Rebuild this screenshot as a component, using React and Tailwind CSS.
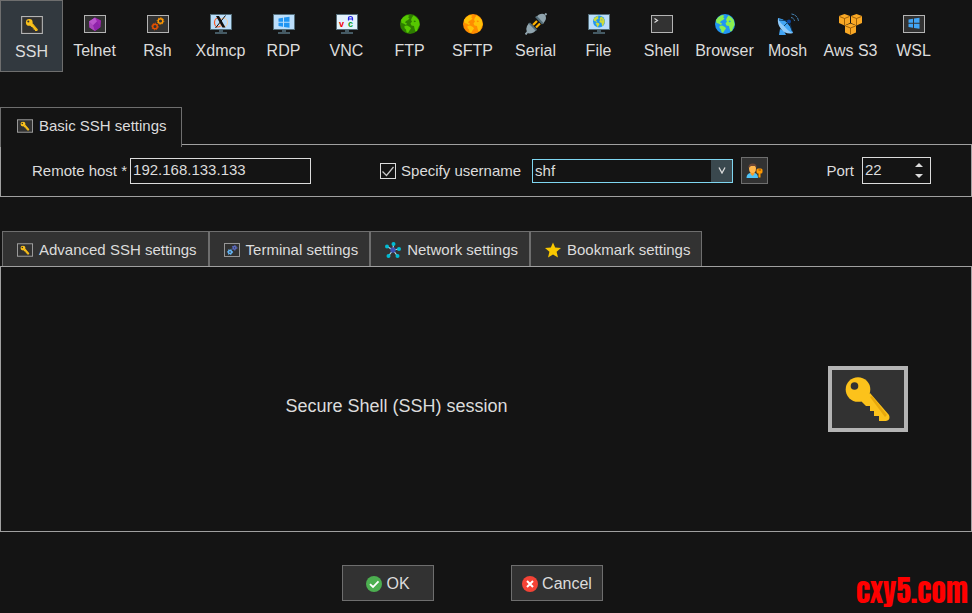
import { useState } from "react";

const KEY_SHAFT = "M33 35 L38 40 H42 V45 H46 V50 H51 V55 H58 Q63 54 61 49 L42 27 Z";

function KeyIcon({ className }) {
  return (
    <svg viewBox="0 0 80 66" className={className} aria-hidden="true">
      <rect x="2" y="2" width="76" height="62" fill="#323232" stroke="#b4b4b4" strokeWidth="4" />
      <path d={KEY_SHAFT} fill="#fcc21b" />
      <path d="M42 31 L57 51 L59 49 L44 30 Z" fill="#e8a80c" />
      <circle cx="30" cy="23.5" r="12.3" fill="#fcc21b" />
      <circle cx="26.5" cy="20" r="3.8" fill="#323232" />
    </svg>
  );
}

function Frame({ children }) {
  return (
    <svg viewBox="0 0 22 18" className="w-[22px] h-[18px]" aria-hidden="true">
      <rect x="0.5" y="0.5" width="21" height="17" fill="#323232" stroke="#b4b4b4" />
      {children}
    </svg>
  );
}

function Monitor({ children, screen = "#bbdefb" }) {
  return (
    <svg viewBox="0 0 22 20" className="w-[22px] h-5" aria-hidden="true">
      <rect x="0" y="0" width="22" height="16" fill="#546e7a" />
      <rect x="1" y="1" width="20" height="14" fill={screen} />
      <path d="M9 16h4v2h4v2H5v-2h4z" fill="#455a64" />
      {children}
    </svg>
  );
}

function GlobeShape({ sea, land }) {
  return (
    <>
      <circle cx="10" cy="10" r="10" fill={sea} />
      <path d="M1 6 Q3 3 6 1.6 L8 1 L9.5 2 L8 3 L9.5 4.5 L8 6 L6 7 L5 8.5 L7 9.5 L6 11 L3.5 9.5 L1.5 9 Z" fill={land} />
      <path d="M4.5 12 L7 11.5 L10 13 L11 14.5 L9.5 16.5 L8 19 L6.5 18 L6 15.5 L4.5 14 Z" fill={land} />
      <path d="M12 3.5 L13.5 1.5 Q18 4 19 7 L19.6 11 L18 14 L17 17 L15.5 17.5 L14.5 14.5 L14 12 L11.5 11.5 L10.5 9.5 L12 7.5 L11 6 Z" fill={land} />
      <path d="M13.5 7 L15 6.5 L16 7.5 L14.5 8.2 Z" fill={sea} />
    </>
  );
}

function Globe({ sea, land }) {
  return (
    <svg viewBox="0 0 20 20" className="w-5 h-5" aria-hidden="true">
      <GlobeShape sea={sea} land={land} />
    </svg>
  );
}

function GearShape({ cx, cy, r, color }) {
  return (
    <>
      <circle cx={cx} cy={cy} r={r} fill="none" stroke={color} strokeWidth="1.5" />
      <circle cx={cx} cy={cy} r={r + 1} fill="none" stroke={color} strokeWidth="1" strokeDasharray="1.2 1.3" />
    </>
  );
}

function WindowsShape({ color }) {
  return (
    <path
      d="M5.5 4.5 L10 3.8 V7.8 H5.5 Z M11 3.6 L16.5 2.8 V7.8 H11 Z M5.5 8.8 H10 V12.8 L5.5 12 Z M11 8.8 H16.5 V13.8 L11 13 Z"
      fill={color}
    />
  );
}

function TelnetIcon() {
  return (
    <Frame>
      <path d="M11 2.5 L17 5.5 L16.5 12 L11 16 L5.5 12.5 L5 6.5 Z" fill="#9c27b0" />
      <path d="M11 2.5 L5 6.5 L9 10.5 L13 6.5 Z" fill="#ba55cc" />
      <path d="M9 10.5 L13 6.5 L16.5 12 L11 16 Z" fill="#8e24aa" />
      <path d="M5 6.5 L9 10.5 L11 16 L5.5 12.5 Z" fill="#ab47bc" />
    </Frame>
  );
}

function RshIcon() {
  return (
    <Frame>
      <GearShape cx={13.5} cy={6} r={2.3} color="#ff9800" />
      <GearShape cx={8} cy={11.5} r={2.3} color="#e65100" />
    </Frame>
  );
}

function XdmcpIcon() {
  return (
    <Monitor>
      <ellipse cx="8" cy="8.5" rx="3.5" ry="4.5" fill="none" stroke="#ff5722" strokeWidth="1.2" />
      <ellipse cx="13.5" cy="8.5" rx="4" ry="4.5" fill="none" stroke="#ffcc99" strokeWidth="1" />
      <path d="M6 2 H9 L15.5 13.5 H12.5 Z" fill="#111" />
      <path d="M15.5 1.5 L5.5 14" stroke="#111" strokeWidth="1" />
    </Monitor>
  );
}

function RdpIcon() {
  return (
    <Monitor>
      <WindowsShape color="#2196f3" />
    </Monitor>
  );
}

function VncIcon() {
  return (
    <Monitor screen="#e3f2fd">
      <g fontFamily="Liberation Sans, sans-serif" fontWeight="bold" fontSize="9">
        <text x="3" y="13" fill="#f00000">v</text>
        <text x="12" y="13" fill="#009a20">c</text>
      </g>
      <path d="M12.5 6.5 V4.5 Q12.5 2.5 14.5 2.5 Q16.5 2.5 16.5 4.5 V6.5 M12.5 5 H16.5" fill="none" stroke="#2020e8" strokeWidth="1.2" />
    </Monitor>
  );
}

function SerialIcon() {
  return (
    <svg viewBox="0 0 22 22" className="w-[22px] h-[22px]" aria-hidden="true">
      <path d="M8 12 L12 8 M11 14.5 L15 10.5" stroke="#ffb300" strokeWidth="2.2" />
      <path d="M20 2 L21.5 0.5" stroke="#90a4ae" strokeWidth="2" />
      <path d="M11 4 L14 1.5 Q18 0 20 2 Q22 5 20 8 L18 11 Z" fill="#90a4ae" />
      <path d="M10 4 L12 3 L18.5 10 L17 11.5 Z" fill="#546e7a" />
      <path d="M4 10 L11 17.5 L8.5 19.5 Q4 21.5 2 19.5 Q0.5 16 2 13 Z" fill="#90a4ae" />
      <path d="M3.5 10.5 L5 9.5 L12 16.5 L11 18 Z" fill="#546e7a" />
      <path d="M2.5 19 L0.5 21.5" stroke="#90a4ae" strokeWidth="2" />
    </svg>
  );
}

function FileIcon() {
  return (
    <Monitor>
      <g transform="translate(5 1.5) scale(0.6)">
        <GlobeShape sea="#2196f3" land="#cddc39" />
      </g>
    </Monitor>
  );
}

function ShellIcon() {
  return (
    <Frame>
      <path d="M3.5 3.5 L6.5 5.5 L3.5 7.5" fill="none" stroke="#d8d8d8" strokeWidth="1.2" />
    </Frame>
  );
}

function MoshIcon() {
  return (
    <svg viewBox="0 0 22 22" className="w-[22px] h-[22px]" aria-hidden="true">
      <path d="M3 16 L7 18 L9 22 H2 Z" fill="#42a5f5" />
      <path d="M1 5 Q7 8 10 12 Q14 16 16 20 Q9 22 4 16 Q0 11 1 5 Z" fill="#90caf9" />
      <path d="M1 5 Q11 6 16 20 Q12 19 7 13 Q2 9 1 5 Z" fill="#42a5f5" />
      <path d="M2 7 L12 8 L15 18 M12 8 L7 13" fill="none" stroke="#0d3b66" strokeWidth="0.9" />
      <circle cx="12" cy="8.5" r="2" fill="#0d47a1" />
      <path d="M14 4.5 Q17 5 17.5 8 M14.5 1 Q20.5 2 21.5 8" fill="none" stroke="#4c92c8" strokeWidth="0.9" strokeDasharray="3 0.7" />
    </svg>
  );
}

function Cube({ x, y }) {
  return (
    <g transform={`translate(${x} ${y})`}>
      <path d="M5.5 0 L11 2 V9 L5.5 11.5 L0 9 V2 Z" fill="#f9a825" />
      <path d="M0.5 2.5 L5.5 4.5 L10.5 2.5 M5.5 4.5 V11" fill="none" stroke="#8a4f00" strokeWidth="0.8" />
    </g>
  );
}

function AwsIcon() {
  return (
    <svg viewBox="0 0 23 21" className="w-[23px] h-[21px]" aria-hidden="true">
      <Cube x={0} y={0} />
      <Cube x={12} y={0} />
      <Cube x={6} y={9.5} />
    </svg>
  );
}

function WslIcon() {
  return (
    <Frame>
      <WindowsShape color="#42a5f5" />
    </Frame>
  );
}

function TerminalIcon() {
  return (
    <svg viewBox="0 0 16 14" className="w-4 h-[14px]" aria-hidden="true">
      <rect x="0.5" y="0.5" width="15" height="13" fill="#323232" stroke="#969696" />
      <GearShape cx={10.5} cy={4.8} r={1.4} color="#5c6bc0" />
      <GearShape cx={6} cy={9} r={1.6} color="#64b5f6" />
    </svg>
  );
}

function NetworkIcon() {
  return (
    <svg viewBox="0 0 16 16" className="w-4 h-4" aria-hidden="true">
      <path d="M8 8 L8.5 2 M8 8 L2 4.5 M8 8 L14 7 M8 8 L3.5 14 M8 8 L12.5 14" stroke="#b0d8e8" strokeWidth="1.2" />
      <g fill="#00bcd4">
        <circle cx="8.5" cy="2" r="2" />
        <circle cx="2" cy="4.5" r="2" />
        <circle cx="14" cy="7" r="2" />
        <circle cx="3.5" cy="14" r="2" />
        <circle cx="12.5" cy="14" r="2" />
      </g>
      <circle cx="8" cy="8" r="2.7" fill="#3f51b5" />
    </svg>
  );
}

function StarIcon() {
  return (
    <svg viewBox="0 0 16 16" className="w-4 h-4" aria-hidden="true">
      <path d="M8 0.5 L10.2 5.6 L16 6 L11.6 9.8 L13 15.5 L8 12.4 L3 15.5 L4.4 9.8 L0 6 L5.8 5.6 Z" fill="#f9c800" />
    </svg>
  );
}

function UserKeyIcon() {
  return (
    <svg viewBox="0 0 17 16" className="w-[17px] h-4" aria-hidden="true">
      <path d="M0.5 15 Q0.5 11 4 10 H9 Q12 11 12 15 Z" fill="#4fc3f7" />
      <path d="M4.5 9 H8.5 V11 L6.5 13 L4.5 11 Z" fill="#f59b28" />
      <ellipse cx="6.5" cy="5.5" rx="3.5" ry="4.5" fill="#ffb74d" />
      <path d="M2.5 5 Q2 1 6 0.5 Q11 0 10.5 5 L9 3 H5 Z" fill="#6b4636" />
      <rect x="10.5" y="5.5" width="6" height="5" rx="1.5" fill="#ff9800" />
      <path d="M13.5 10 V14.5 M14.5 12.5 H13" stroke="#ff9800" strokeWidth="2" />
      <path d="M12.5 7 H15" stroke="#8a4b00" strokeWidth="1" />
    </svg>
  );
}

const SESSIONS = [
  { name: "SSH", icon: <KeyIcon className="w-[22px] h-[18px]" /> },
  { name: "Telnet", icon: <TelnetIcon /> },
  { name: "Rsh", icon: <RshIcon /> },
  { name: "Xdmcp", icon: <XdmcpIcon /> },
  { name: "RDP", icon: <RdpIcon /> },
  { name: "VNC", icon: <VncIcon /> },
  { name: "FTP", icon: <Globe sea="#2e7d00" land="#56c800" /> },
  { name: "SFTP", icon: <Globe sea="#ff8c00" land="#ffc107" /> },
  { name: "Serial", icon: <SerialIcon /> },
  { name: "File", icon: <FileIcon /> },
  { name: "Shell", icon: <ShellIcon /> },
  { name: "Browser", icon: <Globe sea="#2196f3" land="#8af050" /> },
  { name: "Mosh", icon: <MoshIcon /> },
  { name: "Aws S3", icon: <AwsIcon /> },
  { name: "WSL", icon: <WslIcon /> },
];

const TABS = [
  { name: "Advanced SSH settings", icon: <KeyIcon className="w-4 h-[14px]" /> },
  { name: "Terminal settings", icon: <TerminalIcon /> },
  { name: "Network settings", icon: <NetworkIcon /> },
  { name: "Bookmark settings", icon: <StarIcon /> },
];

export default function App() {
  const [session, setSession] = useState("SSH");
  const [host, setHost] = useState("192.168.133.133");
  const [useName, setUseName] = useState(true);
  const [username, setUsername] = useState("shf");
  const [port, setPort] = useState(22);

  return (
    <div className="relative min-h-screen flex flex-col bg-[#141414] text-[#dcdcdc] text-[15px] leading-5 font-['Liberation_Sans',Arial,sans-serif]">
      <nav className="flex h-[72px]">
        {SESSIONS.map((s) => (
          <button
            key={s.name}
            type="button"
            onClick={() => setSession(s.name)}
            className={`w-[63px] shrink-0 flex flex-col items-center gap-[5px] pt-3 text-base leading-5 whitespace-nowrap ${
              session === s.name ? "bg-[#32393f] border border-[#6e6e6e]" : ""
            }`}
          >
            <span className="h-6 flex items-center justify-center">{s.icon}</span>
            <span>{s.name}</span>
          </button>
        ))}
      </nav>

      <section className="mt-[35px]">
        <div className="flex">
          <button
            type="button"
            className="relative z-10 -mb-[3px] h-10 flex items-center gap-[6px] pl-4 pr-[14px] pb-1 bg-[#141414] border border-b-0 border-[#6e6e6e]"
          >
            <KeyIcon className="w-4 h-[14px]" />
            Basic SSH settings
          </button>
        </div>
        <div className="h-[53px] flex items-center pl-[31px] pr-10 border border-[#a0a0a0]">
          <label htmlFor="host" className="mr-[3px]">Remote host *</label>
          <input
            id="host"
            type="text"
            value={host}
            onChange={(e) => setHost(e.target.value)}
            className="w-[181px] h-[26px] px-[2px] pb-[2px] bg-[#141414] border border-[#dcdcdc] outline-none"
          />
          <div className="ml-[69px] flex items-center">
            <label className="flex items-center gap-[5px]">
              <span className="grid w-4 h-4">
                <input
                  type="checkbox"
                  checked={useName}
                  onChange={(e) => setUseName(e.target.checked)}
                  className="peer col-start-1 row-start-1 appearance-none w-4 h-4 border border-[#dcdcdc] outline-none"
                />
                <svg viewBox="0 0 16 16" className="col-start-1 row-start-1 w-4 h-4 pointer-events-none invisible peer-checked:visible" aria-hidden="true">
                  <path d="M2.5 8.5 L6.5 12.5 L13.5 4" fill="none" stroke="#c8c8c8" strokeWidth="1.2" />
                </svg>
              </span>
              Specify username
            </label>
            <div className="ml-[11px] grid w-[201px] h-6 border border-[#7fd6f0]">
              <select
                aria-label="Username"
                value={username}
                onChange={(e) => setUsername(e.target.value)}
                className="col-start-1 row-start-1 appearance-none w-full pl-[2px] bg-[#141414] outline-none"
              >
                <option>shf</option>
              </select>
              <span className="col-start-1 row-start-1 justify-self-end w-[21px] flex items-center justify-center bg-[#3a484e] pointer-events-none">
                <svg viewBox="0 0 8 7" className="w-2 h-[7px]" aria-hidden="true">
                  <path d="M1 0.5 L4 6 L7 0.5" fill="none" stroke="#dcdcdc" strokeWidth="1.3" />
                </svg>
              </span>
            </div>
            <button type="button" aria-label="Manage users" className="ml-2 w-[27px] h-[27px] flex items-center justify-center bg-[#323232] border border-[#6e6e6e]">
              <UserKeyIcon />
            </button>
          </div>
          <div className="ml-auto flex items-center">
            <label htmlFor="port" className="mr-2">Port</label>
            <div className="w-[69px] h-[27px] flex border border-[#dcdcdc]">
              <input
                id="port"
                type="text"
                inputMode="numeric"
                value={port}
                onChange={(e) => setPort(Number(e.target.value) || 0)}
                className="min-w-0 flex-1 pl-[2px] pb-[2px] bg-[#141414] outline-none"
              />
              <div className="w-[22px] flex flex-col items-center justify-center gap-[7px]">
                <button type="button" aria-label="Increase port" onClick={() => setPort(port + 1)}>
                  <svg viewBox="0 0 8 4" className="block w-2 h-1"><path d="M0 4 L4 0 L8 4 Z" fill="#dcdcdc" /></svg>
                </button>
                <button type="button" aria-label="Decrease port" onClick={() => setPort(port - 1)}>
                  <svg viewBox="0 0 8 4" className="block w-2 h-1"><path d="M0 0 L4 4 L8 0 Z" fill="#dcdcdc" /></svg>
                </button>
              </div>
            </div>
          </div>
        </div>
      </section>

      <section className="mt-[34px] flex-1 flex flex-col">
        <div className="flex pl-[2px]">
          {TABS.map((t) => (
            <button
              key={t.name}
              type="button"
              className="h-[35px] flex items-center gap-[6px] pl-[14px] pr-[11px] pt-px bg-[#323232] border border-b-0 border-[#6e6e6e] whitespace-nowrap"
            >
              {t.icon}
              {t.name}
            </button>
          ))}
        </div>
        <div className="flex-1 flex items-center pr-[63px] border border-[#a0a0a0]">
          <p className="flex-1 pt-[14px] text-center text-lg">Secure Shell (SSH) session</p>
          <KeyIcon className="ml-9 w-20 h-[66px]" />
        </div>
      </section>

      <footer className="flex justify-center gap-[77px] pt-[33px] pb-3 pr-[27px] text-base">
        <button type="button" className="w-[92px] h-9 flex items-center justify-center gap-1 pt-px bg-[#323232] border border-[#6e6e6e]">
          <svg viewBox="0 0 16 16" className="w-4 h-4" aria-hidden="true">
            <circle cx="8" cy="8" r="8" fill="#4caf50" />
            <path d="M4 8.2 L7 11 L12.5 5.3" fill="none" stroke="#fff" strokeWidth="1.8" />
          </svg>
          OK
        </button>
        <button type="button" className="w-[92px] h-9 flex items-center justify-center gap-1 pt-px bg-[#323232] border border-[#6e6e6e]">
          <svg viewBox="0 0 16 16" className="w-4 h-4" aria-hidden="true">
            <circle cx="8" cy="8" r="8" fill="#f44336" />
            <path d="M5 5 L11 11 M11 5 L5 11" stroke="#fff" strokeWidth="2" />
          </svg>
          Cancel
        </button>
      </footer>

      <span className="absolute right-1 bottom-0 text-[29px] leading-[44px] text-[#ff0000] font-[Impact,Anton,'Liberation_Sans',sans-serif]">
        cxy5.com
      </span>
    </div>
  );
}
